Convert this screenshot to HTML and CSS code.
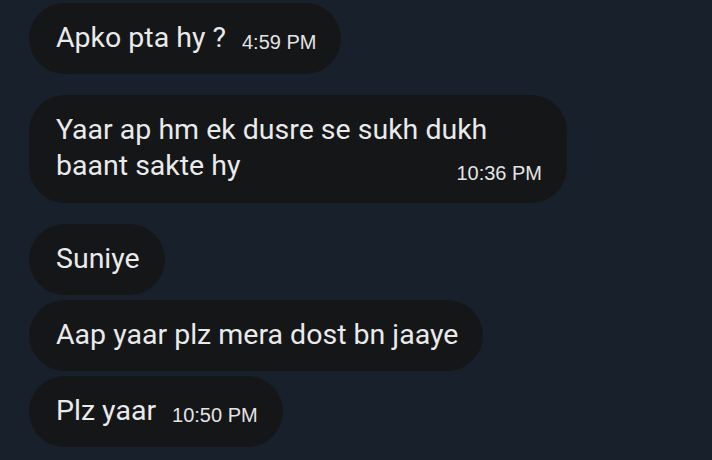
FILE: index.html
```html
<!DOCTYPE html>
<html>
<head>
<meta charset="utf-8">
<link rel="stylesheet" href="styles.css">
</head>
<body>
<div class="chat">
  <div class="group">
    <div class="bubble"><span class="text">Apko pta hy ?</span><span class="time">4:59 PM</span></div>
  </div>
  <div class="group">
    <div class="bubble wide">
      <div class="line">Yaar ap hm ek dusre se sukh dukh</div>
      <div class="line last"><span class="text">baant sakte hy</span><span class="time end">10:36 PM</span></div>
    </div>
  </div>
  <div class="group">
    <div class="bubble"><span class="text">Suniye</span></div>
    <div class="bubble"><span class="text">Aap yaar plz mera dost bn jaaye</span></div>
    <div class="bubble"><span class="text">Plz yaar</span><span class="time">10:50 PM</span></div>
  </div>
</div>
</body>
</html>
```

FILE: styles.css
```css
html, body {
  margin: 0;
  padding: 0;
  background: #18212b;
  width: 712px;
  height: 460px;
  overflow: hidden;
}
.chat {
  display: flex;
  flex-direction: column;
  align-items: flex-start;
  gap: 21px;
  padding: 3px 0 0 29px;
}
.group {
  display: flex;
  flex-direction: column;
  align-items: flex-start;
  gap: 5px;
}
.bubble {
  background: #151618;
  color: #e9eaeb;
  border-radius: 36px;
  padding: 17px 25px 18px 27px;
  font-family: Roboto, "Noto Sans", sans-serif;
  font-size: 28.5px;
  line-height: 36px;
  max-width: 486px;
}
.bubble.wide {
  width: 486px;
  padding-bottom: 19px;
}
.line.last {
  display: flex;
  justify-content: space-between;
  align-items: flex-start;
  height: 36px;
}
.time {
  font-family: "Liberation Sans", Arial, sans-serif;
  font-size: 20px;
  line-height: 20px;
  margin-left: 16px;
  vertical-align: -2px;
  color: #e3e4e5;
}
.time.end {
  margin-top: 15px;
}
```
